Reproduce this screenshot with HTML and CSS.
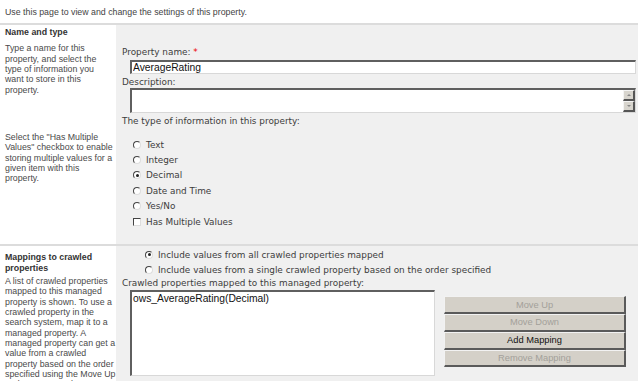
FILE: index.html
```html
<!DOCTYPE html>
<html lang="en">
<head>
    <meta charset="UTF-8">
    <title>Edit Managed Property</title>
    <link rel="stylesheet" href="styles.css">
</head>
<body>
    <p class="intro">Use this page to view and change the settings of this property.</p>

    <!-- Name and type -->
    <div class="section section-name">
        <div class="section-info">
            <h3>Name and type</h3>
            <p>Type a name for this property, and select the type of information you want to store in this property.</p>
            <p class="info-second">Select the "Has Multiple<br>Values" checkbox to enable<br>storing multiple values for a<br>given item with this<br>property.</p>
        </div>
        <div class="section-body">
            <div class="field-label">Property name: <span class="required">*</span></div>
            <input class="text-input" type="text" value="AverageRating">
            <div class="field-label">Description:</div>
            <div class="textarea">
                <div class="scrollbar">
                    <span class="scroll-btn"><span class="arrow-up"></span></span>
                    <span class="scroll-btn"><span class="arrow-down"></span></span>
                </div>
            </div>
            <div class="field-label">The type of information in this property:</div>
            <ul class="option-list">
                <li><span class="radio"></span>Text</li>
                <li><span class="radio"></span>Integer</li>
                <li><span class="radio checked"></span>Decimal</li>
                <li><span class="radio"></span>Date and Time</li>
                <li><span class="radio"></span>Yes/No</li>
                <li><span class="checkbox"></span>Has Multiple Values</li>
            </ul>
        </div>
    </div>

    <!-- Mappings -->
    <div class="section section-mappings">
        <div class="section-info">
            <h3>Mappings to crawled properties</h3>
            <p>A list of crawled properties mapped to this managed property is shown. To use a crawled property in the search system, map it to a managed property. A managed property can get a value from a crawled property based on the order specified using the Move Up and Move Down buttons.</p>
        </div>
        <div class="section-body">
            <ul class="option-list mapping-options">
                <li><span class="radio checked"></span>Include values from all crawled properties mapped</li>
                <li><span class="radio"></span>Include values from a single crawled property based on the order specified</li>
            </ul>
            <div class="field-label">Crawled properties mapped to this managed property:</div>
            <div class="mapping-row">
                <div class="listbox">ows_AverageRating(Decimal)</div>
                <div class="button-stack">
                    <button class="btn" disabled>Move Up</button>
                    <button class="btn" disabled>Move Down</button>
                    <button class="btn">Add Mapping</button>
                    <button class="btn" disabled>Remove Mapping</button>
                </div>
            </div>
        </div>
    </div>
</body>
</html>
```

FILE: styles.css
```css
* {
    margin: 0;
    padding: 0;
    box-sizing: border-box;
}

body {
    background-color: white;
    font-family: 'Liberation Sans', Arial, sans-serif;
    color: #4a4a4a;
    padding-right: 2px;
    overflow: hidden;
}

.intro {
    font-size: 8.8px;
    line-height: 11px;
    padding: 7px 0 5px 5px;
    color: #444;
}

.section {
    display: grid;
    grid-template-columns: 116px 1fr;
    border-top: 2px solid #dcdcdc;
}

.section-info {
    padding: 2px 4px 0 5px;
    font-size: 8.8px;
    line-height: 10.35px;
}

.section-info h3 {
    font-size: 8.8px;
    font-weight: bold;
    color: #333;
    line-height: 10.35px;
}

.section-info p {
    margin-top: 6px;
}

.section-info .info-second {
    margin-top: 37px;
    white-space: nowrap;
}

.section-mappings .section-info h3 {
    margin-top: 4px;
}

.section-mappings .section-info p {
    margin: 3px -6px 0 0;
}

.section-body {
    background-color: #f0f0f0;
    padding: 21px 2px 15px 6px;
    font-family: 'DejaVu Sans', Verdana, sans-serif;
    font-size: 8.9px;
    color: #3c3c3c;
}

.field-label {
    line-height: 12px;
}

.required {
    color: #e00;
}

.text-input {
    display: block;
    width: calc(100% - 8px);
    height: 14px;
    margin: 2px 0 2px 8px;
    border-style: solid;
    border-width: 2px 1px 1px 2px;
    border-color: #5f5f5f #d8d8d8 #d8d8d8 #5f5f5f;
    background: white;
    font-family: 'Liberation Sans', Arial, sans-serif;
    font-size: 10.3px;
    padding: 0 1px;
    color: #111;
    outline: none;
}

.textarea {
    display: flex;
    justify-content: flex-end;
    width: calc(100% - 8px);
    height: 25px;
    margin: 0 0 2px 8px;
    border-style: solid;
    border-width: 2px 1px 1px 2px;
    border-color: #5f5f5f #d8d8d8 #d8d8d8 #5f5f5f;
    background: white;
}

.scrollbar {
    display: flex;
    flex-direction: column;
    width: 12px;
}

.scroll-btn {
    flex: 1;
    display: flex;
    align-items: center;
    justify-content: center;
    background: #d8d5ce;
    border-style: solid;
    border-width: 1px 2px 2px 1px;
    border-color: #f4f4f4 #555 #555 #f4f4f4;
}

.arrow-up {
    border-left: 2px solid transparent;
    border-right: 2px solid transparent;
    border-bottom: 2px solid #888;
}

.arrow-down {
    border-left: 2px solid transparent;
    border-right: 2px solid transparent;
    border-top: 2px solid #888;
}

.option-list {
    list-style: none;
    margin-top: 10px;
    padding-left: 11px;
}

.option-list li {
    display: flex;
    align-items: center;
    height: 15.4px;
}

.radio {
    width: 8px;
    height: 8px;
    margin-right: 5px;
    border-radius: 50%;
    border: 1px solid;
    border-color: #444 #ddd #ddd #444;
    background: white;
    display: flex;
    align-items: center;
    justify-content: center;
}

.radio.checked::after {
    content: "";
    width: 3px;
    height: 3px;
    border-radius: 50%;
    background: #222;
}

.checkbox {
    width: 8px;
    height: 8px;
    margin-right: 5px;
    border: 1px solid;
    border-color: #444 #ddd #ddd #444;
    background: white;
}

.section-mappings .section-body {
    padding-top: 1px;
    padding-bottom: 10px;
}

.mapping-options {
    margin-top: 0;
    padding-left: 23px;
}

.mapping-options li {
    height: 15px;
}

.mapping-row {
    display: flex;
    align-items: flex-start;
    margin-top: 1px;
    padding-left: 8px;
}

.listbox {
    width: 305px;
    height: 86px;
    border-style: solid;
    border-width: 2px 1px 1px 2px;
    border-color: #5f5f5f #d8d8d8 #d8d8d8 #5f5f5f;
    background: white;
    font-family: 'Liberation Sans', Arial, sans-serif;
    font-size: 10.3px;
    color: #111;
    padding: 1px 1px;
}

.button-stack {
    display: flex;
    flex-direction: column;
    width: 182px;
    margin: 6px 0 0 9px;
}

.btn {
    height: 17.75px;
    background: #d4d0c8;
    border-style: solid;
    border-width: 1px 2px 2px 1px;
    border-color: #f2f2f2 #5a5a5a #5a5a5a #f2f2f2;
    font-family: 'Liberation Sans', Arial, sans-serif;
    font-size: 9.3px;
    color: #111;
}

.btn:disabled {
    color: #a3a09a;
}
```
